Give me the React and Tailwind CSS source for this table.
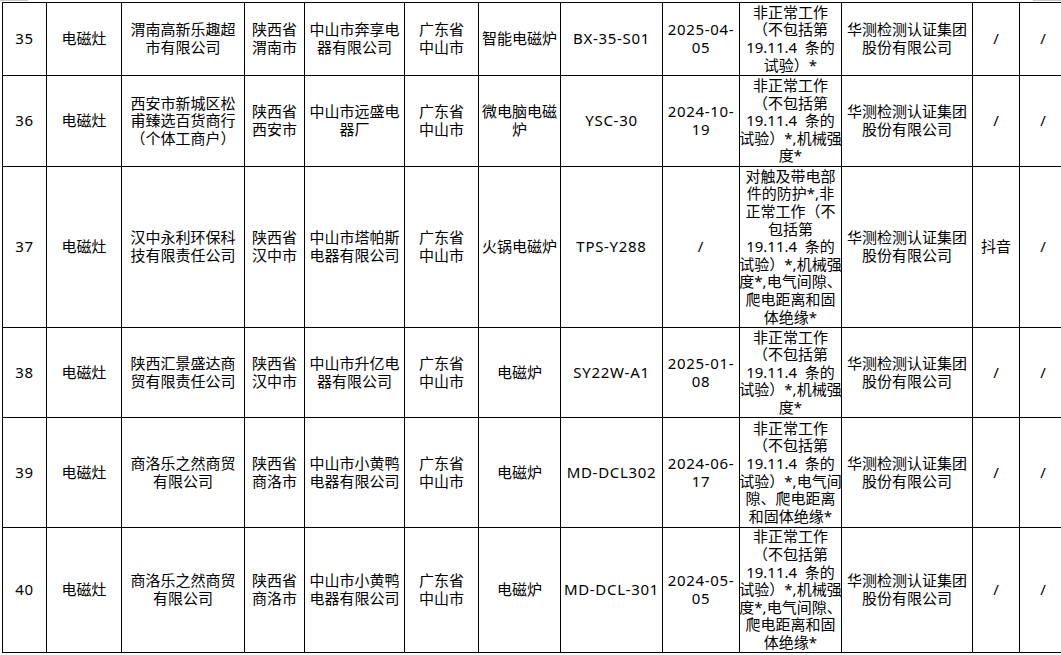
const rows = [
  {
    no: "35",
    name: "电磁灶",
    seller: ["渭南高新乐趣超", "市有限公司"],
    area: ["陕西省", "渭南市"],
    maker: ["中山市奔享电", "器有限公司"],
    makerArea: ["广东省", "中山市"],
    product: ["智能电磁炉"],
    model: ["BX-35-S01"],
    date: ["2025-04-", "05"],
    items: ["非正常工作", "（不包括第", "19.11.4  条的", "试验）*"],
    lab: ["华测检测认证集团", "股份有限公司"],
    platform: "/",
    note: "/",
  },
  {
    no: "36",
    name: "电磁灶",
    seller: ["西安市新城区松", "甫臻选百货商行", "（个体工商户）"],
    area: ["陕西省", "西安市"],
    maker: ["中山市远盛电", "器厂"],
    makerArea: ["广东省", "中山市"],
    product: ["微电脑电磁", "炉"],
    model: ["YSC-30"],
    date: ["2024-10-", "19"],
    items: ["非正常工作", "（不包括第", "19.11.4  条的", "试验）*,机械强", "度*"],
    lab: ["华测检测认证集团", "股份有限公司"],
    platform: "/",
    note: "/",
  },
  {
    no: "37",
    name: "电磁灶",
    seller: ["汉中永利环保科", "技有限责任公司"],
    area: ["陕西省", "汉中市"],
    maker: ["中山市塔帕斯", "电器有限公司"],
    makerArea: ["广东省", "中山市"],
    product: ["火锅电磁炉"],
    model: ["TPS-Y288"],
    date: ["/"],
    items: [
      "对触及带电部",
      "件的防护*,非",
      "正常工作（不",
      "包括第",
      "19.11.4  条的",
      "试验）*,机械强",
      "度*,电气间隙、",
      "爬电距离和固",
      "体绝缘*",
    ],
    lab: ["华测检测认证集团", "股份有限公司"],
    platform: "抖音",
    note: "/",
  },
  {
    no: "38",
    name: "电磁灶",
    seller: ["陕西汇景盛达商", "贸有限责任公司"],
    area: ["陕西省", "汉中市"],
    maker: ["中山市升亿电", "器有限公司"],
    makerArea: ["广东省", "中山市"],
    product: ["电磁炉"],
    model: ["SY22W-A1"],
    date: ["2025-01-", "08"],
    items: ["非正常工作", "（不包括第", "19.11.4  条的", "试验）*,机械强", "度*"],
    lab: ["华测检测认证集团", "股份有限公司"],
    platform: "/",
    note: "/",
  },
  {
    no: "39",
    name: "电磁灶",
    seller: ["商洛乐之然商贸", "有限公司"],
    area: ["陕西省", "商洛市"],
    maker: ["中山市小黄鸭", "电器有限公司"],
    makerArea: ["广东省", "中山市"],
    product: ["电磁炉"],
    model: ["MD-DCL302"],
    date: ["2024-06-", "17"],
    items: ["非正常工作", "（不包括第", "19.11.4  条的", "试验）*,电气间", "隙、爬电距离", "和固体绝缘*"],
    lab: ["华测检测认证集团", "股份有限公司"],
    platform: "/",
    note: "/",
  },
  {
    no: "40",
    name: "电磁灶",
    seller: ["商洛乐之然商贸", "有限公司"],
    area: ["陕西省", "商洛市"],
    maker: ["中山市小黄鸭", "电器有限公司"],
    makerArea: ["广东省", "中山市"],
    product: ["电磁炉"],
    model: ["MD-DCL-301"],
    date: ["2024-05-", "05"],
    items: [
      "非正常工作",
      "（不包括第",
      "19.11.4  条的",
      "试验）*,机械强",
      "度*,电气间隙、",
      "爬电距离和固",
      "体绝缘*",
    ],
    lab: ["华测检测认证集团", "股份有限公司"],
    platform: "/",
    note: "/",
  },
];

function Cell({ lines, latin }) {
  const list = Array.isArray(lines) ? lines : [lines];
  return (
    <div
      className={
        "bg-white flex flex-col items-center justify-center text-center whitespace-pre " +
        (latin ? "tracking-[0.7px]" : "tracking-normal")
      }
    >
      {list.map((line, i) => (
        <div key={i}>{line}</div>
      ))}
    </div>
  );
}

export default function App() {
  return (
    <div className="w-[1061px] h-[655px] overflow-hidden bg-white text-black text-[15px] leading-[17.6px] font-['Noto_Sans','Noto_Sans_CJK_SC',sans-serif]">
      <div className="flex h-[2px]">
        <div className="w-[28px] border-t border-[#c8c8c8]" />
        <div className="flex-1" />
        <div className="w-[28px] border-t border-[#c8c8c8]" />
      </div>
      <div className="ml-[2px] w-[1100px] bg-black p-px grid gap-px grid-cols-[43px_74px_122px_59px_99px_73px_81px_101px_76px_101px_130px_46px_46px] grid-rows-[72px_90px_160px_89px_109px_124px]">
        {rows.map((r) => (
          <div key={r.no} className="contents">
            <Cell lines={r.no} latin />
            <Cell lines={r.name} />
            <Cell lines={r.seller} />
            <Cell lines={r.area} />
            <Cell lines={r.maker} />
            <Cell lines={r.makerArea} />
            <Cell lines={r.product} />
            <Cell lines={r.model} latin />
            <Cell lines={r.date} latin />
            <Cell lines={r.items} />
            <Cell lines={r.lab} />
            <Cell lines={r.platform} />
            <Cell lines={r.note} />
          </div>
        ))}
      </div>
    </div>
  );
}
